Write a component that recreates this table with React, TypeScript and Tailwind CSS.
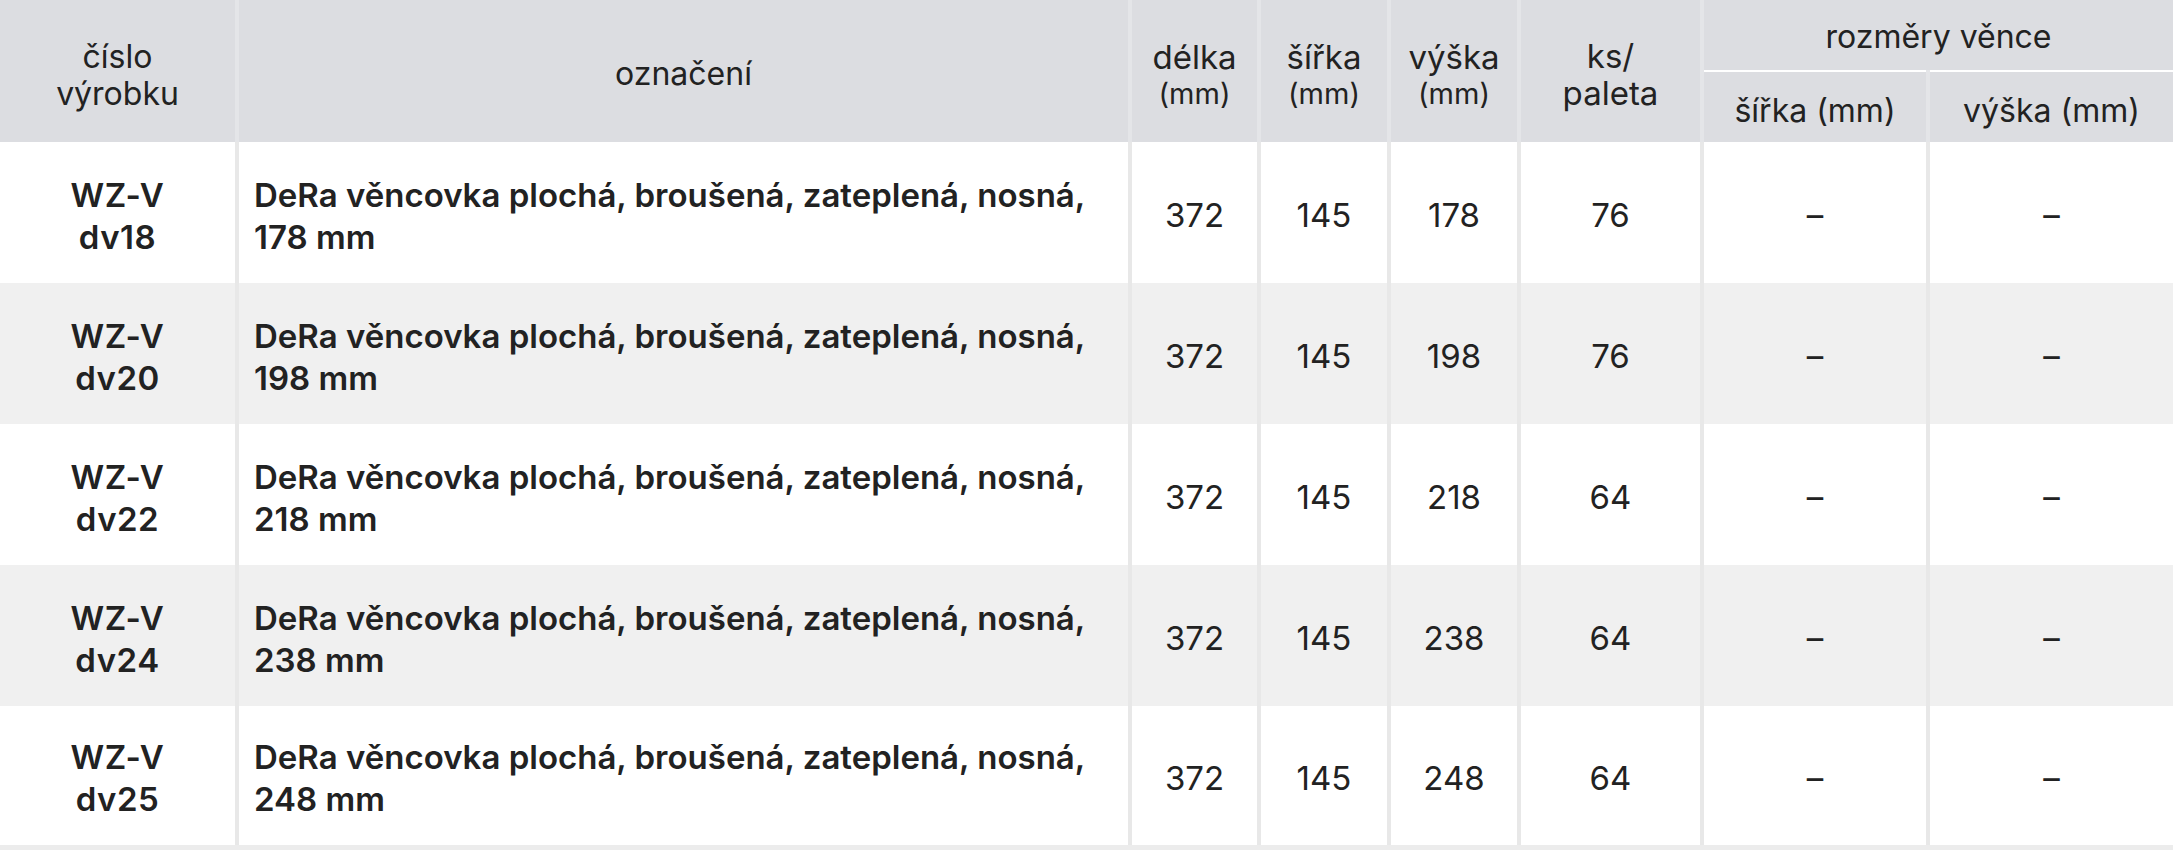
const rows = [
  { code: "dv18", h: "178", ks: "76" },
  { code: "dv20", h: "198", ks: "76" },
  { code: "dv22", h: "218", ks: "64" },
  { code: "dv24", h: "238", ks: "64" },
  { code: "dv25", h: "248", ks: "64" },
];

export default function App() {
  return (
    <div className="min-h-screen bg-white text-[#222] font-['Inter','Noto_Sans',sans-serif]">
      <table className="w-[2173px] table-fixed border-collapse text-center">
        <colgroup>
          <col className="w-[237px]" />
          <col className="w-[893px]" />
          <col className="w-[129px]" />
          <col className="w-[130px]" />
          <col className="w-[130px]" />
          <col className="w-[183px]" />
          <col className="w-[226px]" />
          <col className="w-[245px]" />
        </colgroup>
        <thead className="bg-[#dcdde1] font-normal">
          <tr className="h-[71px]">
            <th rowSpan={2} className="border-r-4 border-[#e4e5e8] pt-[8px] text-[32px] leading-[37px] font-normal">
              číslo
              <br />
              výrobku
            </th>
            <th rowSpan={2} className="border-x-4 border-[#e4e5e8] pt-[6px] text-[32px] font-normal">
              označení
            </th>
            <th rowSpan={2} className="border-x-4 border-[#e4e5e8] pt-[8px] text-[33px] leading-[37px] font-normal">
              délka
              <div className="text-[29px] leading-[36px]">(mm)</div>
            </th>
            <th rowSpan={2} className="border-x-4 border-[#e4e5e8] pt-[8px] text-[33px] leading-[37px] font-normal">
              šířka
              <div className="text-[29px] leading-[36px]">(mm)</div>
            </th>
            <th rowSpan={2} className="border-x-4 border-[#e4e5e8] pt-[8px] text-[33px] leading-[37px] font-normal">
              výška
              <div className="text-[29px] leading-[36px]">(mm)</div>
            </th>
            <th rowSpan={2} className="border-x-4 border-[#e4e5e8] pt-[8px] text-[33px] leading-[37px] font-normal">
              ks/
              <br />
              paleta
            </th>
            <th colSpan={2} className="border-l-4 border-b-2 border-b-white border-l-[#e4e5e8] pt-1 text-[32px] font-normal">
              rozměry věnce
            </th>
          </tr>
          <tr className="h-[71px]">
            <th className="border-x-4 border-[#e4e5e8] pt-2 text-[32px] font-normal">šířka (mm)</th>
            <th className="border-l-4 border-[#e4e5e8] pt-2 text-[32px] font-normal">výška (mm)</th>
          </tr>
        </thead>
        <tbody>
          {rows.map((r, i) => (
            <tr
              key={r.code}
              className={`h-[141px] ${i % 2 ? "bg-[#f0f0f0]" : "bg-white"} ${i === rows.length - 1 ? "border-b-[5px] border-[#ececec]" : ""}`}
            >
              <td className="border-r-4 border-[#e8e8e8] pt-[6px] text-[33px] leading-[42px] font-semibold tracking-[0.5px]">
                WZ-V
                <br />
                {r.code}
              </td>
              <td className="border-x-4 border-[#e8e8e8] pt-[6px] pl-[15px] pr-4 text-left text-[33px] leading-[42px] font-semibold">
                DeRa věncovka plochá, broušená, zateplená, nosná,
                <br />
                {r.h} mm
              </td>
              <td className="border-x-4 border-[#e8e8e8] pt-[7px] text-[33px]">372</td>
              <td className="border-x-4 border-[#e8e8e8] pt-[7px] text-[33px]">145</td>
              <td className="border-x-4 border-[#e8e8e8] pt-[7px] text-[33px]">{r.h}</td>
              <td className="border-x-4 border-[#e8e8e8] pt-[7px] text-[33px]">{r.ks}</td>
              <td className="border-x-4 border-[#e8e8e8] pt-[7px] text-[33px]">–</td>
              <td className="border-l-4 border-[#e8e8e8] pt-[7px] text-[33px]">–</td>
            </tr>
          ))}
        </tbody>
      </table>
    </div>
  );
}
